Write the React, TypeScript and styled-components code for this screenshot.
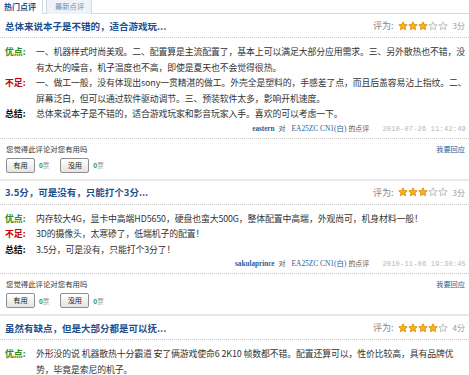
import React from 'react'
import styled, { createGlobalStyle } from 'styled-components'

type Review = {
  title: string
  score: number
  pros: string
  cons?: string
  summary?: string
  user?: string
  date?: string
}

const reviews: Review[] = [
  {
    title: '总体来说本子是不错的，适合游戏玩...',
    score: 3,
    pros: '一、机器样式时尚美观。二、配置算是主流配置了，基本上可以满足大部分应用需求。三、另外散热也不错，没有太大的噪音，机子温度也不高，即使是夏天也不会觉得很热。',
    cons: '一、做工一般，没有体现出sony一贯精湛的做工。外壳全是塑料的，手感差了点，而且后盖容易沾上指纹。二、屏幕泛白，但可以通过软件驱动调节。三、预装软件太多，影响开机速度。',
    summary: '总体来说本子是不错的，适合游戏玩家和影音玩家入手。喜欢的可以考虑一下。',
    user: 'eastern',
    date: '2010-07-26 11:42:49',
  },
  {
    title: '3.5分，可是没有，只能打个3分...',
    score: 3,
    pros: '内存较大4G，显卡中高端HD5650，硬盘也蛮大500G，整体配置中高端，外观尚可，机身材料一般！',
    cons: '3D的摄像头，太寒碜了，低端机子的配置！',
    summary: '3.5分，可是没有，只能打个3分了！',
    user: 'sakulaprince',
    date: '2010-11-06 19:30:45',
  },
  {
    title: '虽然有缺点，但是大部分都是可以抚...',
    score: 4,
    pros: '外形没的说 机器散热十分霸道 安了俩游戏使命6 2K10 帧数都不错。配置还算可以，性价比较高，具有品牌优势，毕竟是索尼的机子。',
  },
]

const GlobalStyle = createGlobalStyle`
  html, body {
    margin: 0;
    padding: 0;
    background: #fff;
  }
  body {
    font-family: "Noto Sans CJK SC", "Liberation Sans", sans-serif;
    color: #333;
  }
`

const Wrapper = styled.div`
  width: 469px;
`
const TabBar = styled.div`
  display: flex;
  height: 13px;
  border-bottom: 1px solid #cfd9e4;
`
const Tab = styled.div<{ $active?: boolean }>`
  width: ${p => (p.$active ? '43px' : '46px')};
  margin-left: ${p => (p.$active ? '0' : '3px')};
  height: 14px;
  box-sizing: border-box;
  padding-left: ${p => (p.$active ? '4px' : '8px')};
  font-size: ${p => (p.$active ? '8px' : '7.3px')};
  line-height: 13px;
  font-weight: ${p => (p.$active ? 'bold' : 'normal')};
  color: ${p => (p.$active ? '#1d4f8d' : '#6f8db3')};
  background: ${p => (p.$active ? '#fff' : '#eef3f8')};
  border-right: 1px solid #cfd9e4;
  border-left: ${p => (p.$active ? 'none' : '1px solid #cfd9e4')};
  border-bottom: ${p => (p.$active ? '1px solid #fff' : 'none')};
`
const Block = styled.div<{ $last?: boolean }>`
  border-bottom: ${p => (p.$last ? 'none' : '2px solid #e8e8e8')};
`
const TitleRow = styled.div`
  display: flex;
  align-items: center;
  justify-content: space-between;
  height: 23px;
  padding: 0 4px 0 5px;
  border-bottom: 1px dotted #c8c8c8;
`
const Title = styled.div`
  font-size: 9.5px;
  font-weight: bold;
  color: #1d4f8d;
`
const Rating = styled.div`
  display: flex;
  align-items: center;
  font-size: 9px;
  color: #888;
`
const RateLabel = styled.span`
  margin-right: 4px;
`
const Stars = styled.span`
  display: flex;
  margin-right: 5px;
`
const Score = styled.span`
  font-size: 8px;
  color: #999;
`
const Body = styled.div`
  padding: 6px 0 0 5px;
`
const Row = styled.div`
  display: flex;
  font-size: 8.9px;
  line-height: 15.5px;
`
const Label = styled.span<{ $color: string }>`
  flex: 0 0 31px;
  font-weight: bold;
  color: ${p => p.$color};
`
const Text = styled.span`
  flex: 1;
  color: #333;
  letter-spacing: -0.12px;
`
const Meta = styled.div`
  display: flex;
  justify-content: flex-end;
  align-items: baseline;
  font-size: 7px;
  line-height: 12px;
  padding: 0 3px 3px 0;
  border-bottom: 1px dotted #c8c8c8;
  color: #555;
  white-space: nowrap;
`
const User = styled.span`
  font-family: "Liberation Serif", serif;
  font-size: 7.2px;
  font-weight: bold;
  color: #2d5e95;
  margin-right: 4px;
`
const Product = styled.span`
  font-family: "Liberation Serif", "Noto Sans CJK SC", serif;
  font-size: 7.4px;
  color: #2d5e95;
  margin: 0 2px 0 6px;
`
const DateText = styled.span`
  font-family: "Liberation Mono", monospace;
  font-size: 7px;
  letter-spacing: 0.2px;
  color: #b5b5b5;
  margin-left: 13px;
`
const Vote = styled.div`
  display: flex;
  justify-content: space-between;
  padding: 4px 4px 6px 6px;
`
const VoteColumn = styled.div`
  display: flex;
  flex-direction: column;
  gap: 3px;
`
const Question = styled.div`
  font-size: 7.4px;
  line-height: 12px;
  color: #333;
`
const Buttons = styled.div`
  display: flex;
  align-items: center;
`
const VoteButton = styled.button`
  width: 29px;
  height: 15px;
  padding: 0;
  box-sizing: border-box;
  border: 1px solid #8f8f8f;
  border-radius: 2px;
  background: linear-gradient(#ffffff, #e4e4e4);
  font-family: "Noto Sans CJK SC", sans-serif;
  font-size: 7.2px;
  line-height: 13px;
  color: #222;
`
const Count = styled.span`
  margin: 0 11px 0 4px;
  font-size: 6.5px;
  color: #999;
  & b {
    color: #2f9a24;
  }
`
const Reply = styled.a`
  font-size: 7.2px;
  line-height: 12px;
  color: #2d5e95;
  text-decoration: none;
`

function Star({ on }: { on: boolean }) {
  return (
    <svg width="10" height="10" viewBox="0 0 20 20">
      <polygon
        points="10,1.5 12.6,7 18.5,7.6 14,11.6 15.3,17.6 10,14.5 4.7,17.6 6,11.6 1.5,7.6 7.4,7"
        fill={on ? '#fbb40f' : '#f2f2f2'}
        stroke={on ? '#d9890a' : '#b9b9b9'}
        strokeWidth="1.6"
        strokeLinejoin="round"
      />
    </svg>
  )
}

function ReviewBlock({ review, last }: { review: Review; last?: boolean }) {
  return (
    <Block $last={last}>
      <TitleRow>
        <Title>{review.title}</Title>
        <Rating>
          <RateLabel>评为:</RateLabel>
          <Stars>
            {[1, 2, 3, 4, 5].map(n => (
              <Star key={n} on={n <= review.score} />
            ))}
          </Stars>
          <Score>{review.score}分</Score>
        </Rating>
      </TitleRow>
      <Body>
        <Row>
          <Label $color="#2e8b1f">优点:</Label>
          <Text>{review.pros}</Text>
        </Row>
        {review.cons && (
          <Row>
            <Label $color="#cc0000">不足:</Label>
            <Text>{review.cons}</Text>
          </Row>
        )}
        {review.summary && (
          <Row>
            <Label $color="#111">总结:</Label>
            <Text>{review.summary}</Text>
          </Row>
        )}
      </Body>
      {review.user && (
        <>
          <Meta>
            <User>{review.user}</User>
            <span>对</span>
            <Product>EA25ZC CN1(白)</Product>
            <span>的点评</span>
            <DateText>{review.date}</DateText>
          </Meta>
          <Vote>
            <VoteColumn>
              <Question>您觉得此评论对您有用吗</Question>
              <Buttons>
                <VoteButton>有用</VoteButton>
                <Count><b>0</b>票</Count>
                <VoteButton>没用</VoteButton>
                <Count><b>0</b>票</Count>
              </Buttons>
            </VoteColumn>
            <Reply href="#">我要回应</Reply>
          </Vote>
        </>
      )}
    </Block>
  )
}

export default function App() {
  return (
    <Wrapper>
      <GlobalStyle />
      <TabBar>
        <Tab $active>热门点评</Tab>
        <Tab>最新点评</Tab>
      </TabBar>
      {reviews.map((r, i) => (
        <ReviewBlock key={i} review={r} last={i === reviews.length - 1} />
      ))}
    </Wrapper>
  )
}
